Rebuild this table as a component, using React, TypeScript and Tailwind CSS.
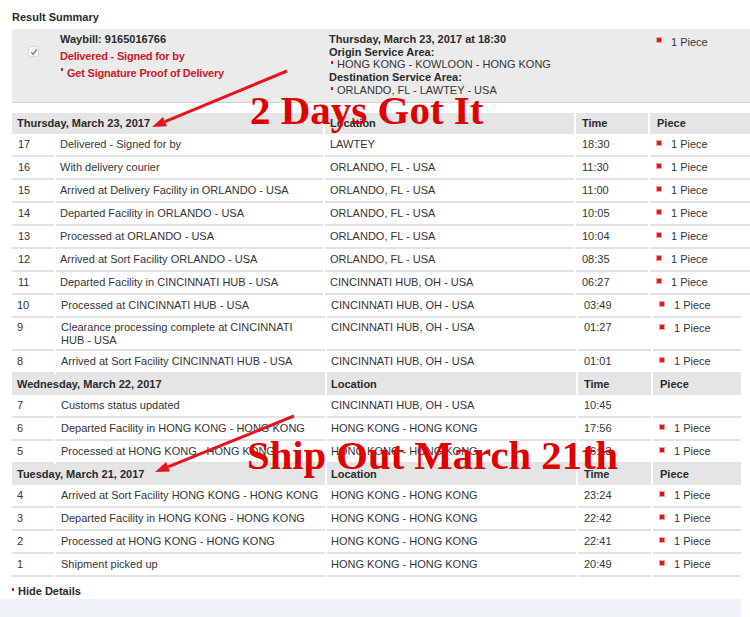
import React from 'react';

type Row = { n: string; desc: React.ReactNode; loc: string; time: string; piece?: boolean };

const blockA: Row[] = [
  { n: '17', desc: 'Delivered - Signed for by', loc: 'LAWTEY', time: '18:30', piece: true },
  { n: '16', desc: 'With delivery courier', loc: 'ORLANDO, FL - USA', time: '11:30', piece: true },
  { n: '15', desc: 'Arrived at Delivery Facility in ORLANDO - USA', loc: 'ORLANDO, FL - USA', time: '11:00', piece: true },
  { n: '14', desc: 'Departed Facility in ORLANDO - USA', loc: 'ORLANDO, FL - USA', time: '10:05', piece: true },
  { n: '13', desc: 'Processed at ORLANDO - USA', loc: 'ORLANDO, FL - USA', time: '10:04', piece: true },
  { n: '12', desc: 'Arrived at Sort Facility ORLANDO - USA', loc: 'ORLANDO, FL - USA', time: '08:35', piece: true },
  { n: '11', desc: 'Departed Facility in CINCINNATI HUB - USA', loc: 'CINCINNATI HUB, OH - USA', time: '06:27', piece: true },
];

const thursdayRest: Row[] = [
  { n: '10', desc: 'Processed at CINCINNATI HUB - USA', loc: 'CINCINNATI HUB, OH - USA', time: '03:49', piece: true },
  {
    n: '9',
    desc: (
      <>
        Clearance processing complete at CINCINNATI
        <br />
        HUB - USA
      </>
    ),
    loc: 'CINCINNATI HUB, OH - USA',
    time: '01:27',
    piece: true,
  },
  { n: '8', desc: 'Arrived at Sort Facility CINCINNATI HUB - USA', loc: 'CINCINNATI HUB, OH - USA', time: '01:01', piece: true },
];

const wednesday: Row[] = [
  { n: '7', desc: 'Customs status updated', loc: 'CINCINNATI HUB, OH - USA', time: '10:45' },
  { n: '6', desc: 'Departed Facility in HONG KONG - HONG KONG', loc: 'HONG KONG - HONG KONG', time: '17:56', piece: true },
  { n: '5', desc: 'Processed at HONG KONG - HONG KONG', loc: 'HONG KONG - HONG KONG', time: '16:13', piece: true },
];

const tuesday: Row[] = [
  { n: '4', desc: 'Arrived at Sort Facility HONG KONG - HONG KONG', loc: 'HONG KONG - HONG KONG', time: '23:24', piece: true },
  { n: '3', desc: 'Departed Facility in HONG KONG - HONG KONG', loc: 'HONG KONG - HONG KONG', time: '22:42', piece: true },
  { n: '2', desc: 'Processed at HONG KONG - HONG KONG', loc: 'HONG KONG - HONG KONG', time: '22:41', piece: true },
  { n: '1', desc: 'Shipment picked up', loc: 'HONG KONG - HONG KONG', time: '20:49', piece: true },
];

const Bullet = () => <span className="block w-[4px] h-[4px] bg-[#d01c24] outline outline-1 outline-[#f3a0a0]" />;

const Dot = () => <span className="inline-block w-[2px] h-[3px] bg-[#d01c24] align-top mt-[3px] mr-[4px]" />;

const Piece = () => (
  <div className="flex">
    <span className="mt-[7px]">
      <Bullet />
    </span>
    <span className="ml-[10px] pt-[2px]">1 Piece</span>
  </div>
);

// wide = upper block (ends at x 750), narrow = lower block (ends at x 741)
const cols = {
  wide: { n: 'w-[42px] pl-[6px]', d: 'w-[267px] pl-[4px]', l: 'w-[249px] pl-[5px]', t: 'w-[72px] pl-[6px]', p: 'w-[100px] pl-[7px]', date: 'w-[311px]' },
  narrow: { n: 'w-[42px] pl-[5px]', d: 'w-[269px] pl-[5px]', l: 'w-[249px] pl-[4px]', t: 'w-[73px] pl-[6px]', p: 'w-[88px] pl-[7px]', date: 'w-[313px]' },
};

const HeaderRow = ({ date, v }: { date: string; v: 'wide' | 'narrow' }) => {
  const c = cols[v];
  return (
    <div className="flex gap-[2px] h-[21px] leading-[21px] font-bold text-[#2a2a2a]">
      <div className={`${c.date} bg-[#e5e5e5] pl-[5px]`}>{date}</div>
      <div className={`${c.l} bg-[#e5e5e5]`}>Location</div>
      <div className={`${c.t} bg-[#e5e5e5]`}>Time</div>
      <div className={`${c.p} bg-[#e5e5e5]`}>Piece</div>
    </div>
  );
};

const DataRow = ({ r, v }: { r: Row; v: 'wide' | 'narrow' }) => {
  const c = cols[v];
  const cell = 'border-b-2 border-[#e3e3e3]';
  const tall = r.n === '9';
  const h = tall ? 'h-[33px]' : 'h-[23px]';
  const txt = tall ? 'leading-[13px] pt-[3px]' : 'leading-[21px]';
  return (
    <div className={`flex gap-[2px] ${h}`}>
      <div className={`${c.n} ${cell} ${txt}`}>{r.n}</div>
      <div className={`${c.d} ${cell} ${txt}`}>{r.desc}</div>
      <div className={`${c.l} ${cell} ${txt}`}>{r.loc}</div>
      <div className={`${c.t} ${cell} ${txt}`}>{r.time}</div>
      <div className={`${c.p} ${cell}`}>{r.piece && <Piece />}</div>
    </div>
  );
};

export default function App() {
  return (
    <div className="relative w-[750px] h-[617px] overflow-hidden bg-white text-[11px] text-[#353535] font-['Liberation_Sans',Arial,sans-serif]">
      <div className="h-[29px] pl-3 pt-[11px] leading-[13px] font-bold text-[#2a2a2a]">Result Summary</div>

      {/* summary box */}
      <div className="ml-3 h-[74px] flex bg-[#ebebeb] border-b border-[#d2d2d2]">
        <div className="w-[48px] pl-4 pt-[17px]">
          <div className="w-[11px] h-[11px] bg-[#f7f7f7] border border-[#d8d8d8] rounded-[2px] flex items-center justify-center">
            <svg width="8" height="8" viewBox="0 0 8 8">
              <path d="M1.2 4.2 L3.1 6.2 L6.8 1.4" stroke="#7a7a7a" strokeWidth="1.3" fill="none" />
            </svg>
          </div>
        </div>
        <div className="w-[269px] pt-[2px] leading-[17px] font-bold">
          <div className="text-[#2a2a2a]">Waybill: 9165016766</div>
          <div className="text-[#c8202a] tracking-[-0.2px]">Delivered - Signed for by</div>
          <div className="text-[#c8202a] pl-[1px] tracking-[-0.2px]">
            <Dot />
            Get Signature Proof of Delivery
          </div>
        </div>
        <div className="w-[328px] pt-[4px] leading-[12.7px]">
          <div className="font-bold text-[#2a2a2a]">Thursday, March 23, 2017 at 18:30</div>
          <div className="font-bold text-[#2a2a2a]">Origin Service Area:</div>
          <div className="pl-[2px]">
            <Dot />
            HONG KONG - KOWLOON - HONG KONG
          </div>
          <div className="font-bold text-[#2a2a2a]">Destination Service Area:</div>
          <div className="pl-[2px]">
            <Dot />
            ORLANDO, FL - LAWTEY - USA
          </div>
        </div>
        <div className="flex pt-[7px]">
          <span className="mt-[2px]">
            <Bullet />
          </span>
          <span className="ml-[10px] leading-[13px]">1 Piece</span>
        </div>
      </div>

      {/* Thursday */}
      <div className="ml-3 mt-[10px] w-[738px]">
        <HeaderRow date="Thursday, March 23, 2017" v="wide" />
        {blockA.map((r) => (
          <DataRow key={r.n} r={r} v="wide" />
        ))}
      </div>
      <div className="ml-3 w-[729px]">
        {thursdayRest.map((r) => (
          <DataRow key={r.n} r={r} v="narrow" />
        ))}
        <HeaderRow date="Wednesday, March 22, 2017" v="narrow" />
        {wednesday.map((r) => (
          <DataRow key={r.n} r={r} v="narrow" />
        ))}
        <HeaderRow date="Tuesday, March 21, 2017" v="narrow" />
        {tuesday.map((r) => (
          <DataRow key={r.n} r={r} v="narrow" />
        ))}
      </div>

      <div className="mt-[8px] pl-3 leading-[13px] font-bold text-[#2a2a2a]">
        <Dot />
        Hide Details
      </div>
      <div className="mt-[1px] w-[741px] h-[30px] bg-[#eef1f6]" />

      {/* annotations */}
      <svg className="absolute left-0 top-0 pointer-events-none" width="750" height="617">
        <line x1="287" y1="71" x2="165" y2="121.6" stroke="#e8141b" strokeWidth="3" />
        <polygon points="152,127 166.8,126.2 163,117" fill="#e8141b" />
        <line x1="294" y1="416" x2="168" y2="466.8" stroke="#e8141b" strokeWidth="3" />
        <polygon points="155,472 169.9,471.4 166.1,462.1" fill="#e8141b" />
      </svg>
      <div className="absolute left-[250px] top-[90px] text-[41px] leading-none font-bold text-[#e00000] font-['Liberation_Serif','Times_New_Roman',serif] whitespace-nowrap pointer-events-none">
        2 Days Got It
      </div>
      <div className="absolute left-[247px] top-[436px] text-[40.7px] leading-none font-bold text-[#e00000] font-['Liberation_Serif','Times_New_Roman',serif] whitespace-nowrap pointer-events-none">
        Ship Out March 21th
      </div>
    </div>
  );
}
